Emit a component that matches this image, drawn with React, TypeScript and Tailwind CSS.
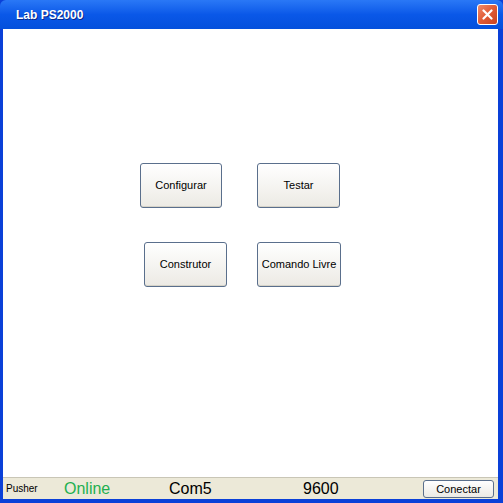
import React from 'react'

const btn =
  'flex items-center justify-center rounded-[3px] border border-[#5a6f8c] bg-gradient-to-b from-white to-[#eceae4] text-[11px] text-black shadow-[inset_0_-1px_0_#d6d3c8]'

function Button({ label, className }: { label: string; className: string }) {
  return <button className={`${btn} ${className}`}>{label}</button>
}

export default function App() {
  return (
    <div
      className="flex h-[503px] w-[503px] flex-col overflow-hidden bg-[#0a40d8]"
      style={{ fontFamily: '"Liberation Sans", Arial, sans-serif' }}
    >
      {/* title bar */}
      <div className="flex h-[29px] shrink-0 items-center justify-between rounded-t-[6px] bg-gradient-to-b from-[#2a78f6] via-[#0a58e8] to-[#0450dc] pl-[16px] pr-[5px]">
        <span className="text-[12px] font-bold text-white [text-shadow:1px_1px_0_#0a2a8a]">
          Lab PS2000
        </span>
        <div className="flex h-[21px] w-[21px] items-center justify-center rounded-[3px] border border-white bg-gradient-to-br from-[#f08a6a] via-[#e05a35] to-[#c8431f]">
          <svg width="11" height="11" viewBox="0 0 11 11">
            <path d="M1.5 1.5 L9.5 9.5 M9.5 1.5 L1.5 9.5" stroke="white" strokeWidth="2.2" strokeLinecap="round" />
          </svg>
        </div>
      </div>

      {/* content */}
      <div className="mx-[3px] mr-[5px] flex flex-1 flex-col bg-white pt-[134px]">
        <div className="flex">
          <Button label="Configurar" className="ml-[137px] h-[45px] w-[82px]" />
          <Button label="Testar" className="ml-[35px] h-[45px] w-[83px]" />
        </div>
        <div className="mt-[34px] flex">
          <Button label="Construtor" className="ml-[141px] h-[45px] w-[83px]" />
          <Button label="Comando Livre" className="ml-[30px] h-[45px] w-[84px]" />
        </div>
      </div>

      {/* status bar */}
      <div className="mx-[3px] mr-[5px] mb-[4px] flex h-[22px] shrink-0 items-center border-t border-[#c9c6b6] bg-[#ece9d8]">
        <span className="ml-[3px] w-[58px] text-[10px] text-black">Pusher</span>
        <span className="w-[105px] text-[16px] text-[#1fb050]">Online</span>
        <span className="w-[134px] text-[16px] text-black">Com5</span>
        <span className="w-[120px] text-[16px] text-black">9600</span>
        <button className="h-[18px] w-[71px] rounded-[3px] border border-[#5a6f8c] bg-gradient-to-b from-white to-[#eceae4] text-[11px] text-black">
          Conectar
        </button>
      </div>
    </div>
  )
}
